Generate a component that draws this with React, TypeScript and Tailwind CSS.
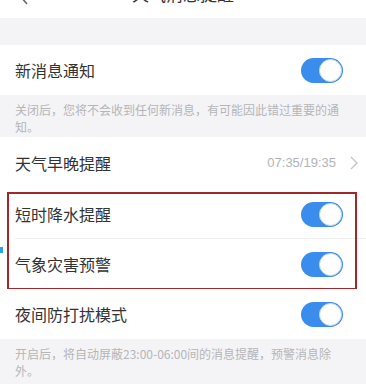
import type { ReactNode } from "react";

const font = { fontFamily: '"Noto Sans CJK SC", "Noto Sans", sans-serif' };

function Toggle() {
  return (
    <div className="relative h-[25px] w-[42px] rounded-full bg-[#3b8ded]">
      <div className="absolute right-[1px] top-[1px] h-[23px] w-[23px] rounded-full border border-[#c9d6e4] bg-white" />
    </div>
  );
}

function Row({ label, right, divider }: { label: string; right: ReactNode; divider?: boolean }) {
  return (
    <div className="relative flex h-[50px] items-center justify-between bg-white pl-[15px] pr-[23px]">
      <span className="text-[16px] leading-none text-[#333]">{label}</span>
      {right}
      {divider && <div className="absolute bottom-0 left-[15px] right-0 h-px bg-[#f0f0f2]" />}
    </div>
  );
}

function Note({ children, h }: { children: ReactNode; h: string }) {
  return (
    <div className={`${h} bg-[#f4f4f6] px-[15px] pt-[6px] text-[12px] leading-[17px] text-[#b5b5b9]`}>
      {children}
    </div>
  );
}

export default function App() {
  return (
    <div className="h-[384px] w-[366px] overflow-hidden bg-[#f4f4f6]" style={font}>
      {/* header, mostly scrolled out */}
      <div className="relative h-[18px] overflow-hidden bg-white">
        <div className="mt-[-15px] flex h-[17px] items-center justify-center text-[17px] leading-none text-[#333]">
          天气消息提醒
        </div>
        <svg className="absolute left-[18px] top-[-11px]" width="12" height="16" viewBox="0 0 12 16">
          <path d="M9 1 L3 8 L9 15" fill="none" stroke="#666" strokeWidth="1.6" />
        </svg>
      </div>
      <div className="h-[27px]" />

      <Row label="新消息通知" right={<Toggle />} />
      <Note h="h-[42px]">关闭后，您将不会收到任何新消息，有可能因此错过重要的通知。</Note>

      <div className="flex h-[52px] items-center justify-between bg-white pl-[15px] pr-[8px]">
        <span className="text-[16px] leading-none text-[#333]">天气早晚提醒</span>
        <div className="flex items-center gap-[14px]">
          <span className="text-[13px] text-[#b3b3b6]" style={{ fontFamily: '"Liberation Sans", Arial, sans-serif' }}>
            07:35/19:35
          </span>
          <svg width="8" height="14" viewBox="0 0 8 14">
            <path d="M1 1 L7 7 L1 13" fill="none" stroke="#c4c4c6" strokeWidth="1.3" />
          </svg>
        </div>
      </div>

      <div className="relative">
        <Row label="短时降水提醒" right={<Toggle />} divider />
        <Row label="气象灾害预警" right={<Toggle />} />
        {/* annotation box */}
        <div className="pointer-events-none absolute bottom-[-1px] left-[7px] right-[9px] top-[3px] border-2 border-[#a3262b]" />
        <div className="absolute left-0 top-[58px] h-[6px] w-[3px] bg-[#2ea0f2]" />
      </div>

      <Row label="夜间防打扰模式" right={<Toggle />} />
      <Note h="h-[46px]">开启后，将自动屏蔽23:00-06:00间的消息提醒，预警消息除外。</Note>
    </div>
  );
}
